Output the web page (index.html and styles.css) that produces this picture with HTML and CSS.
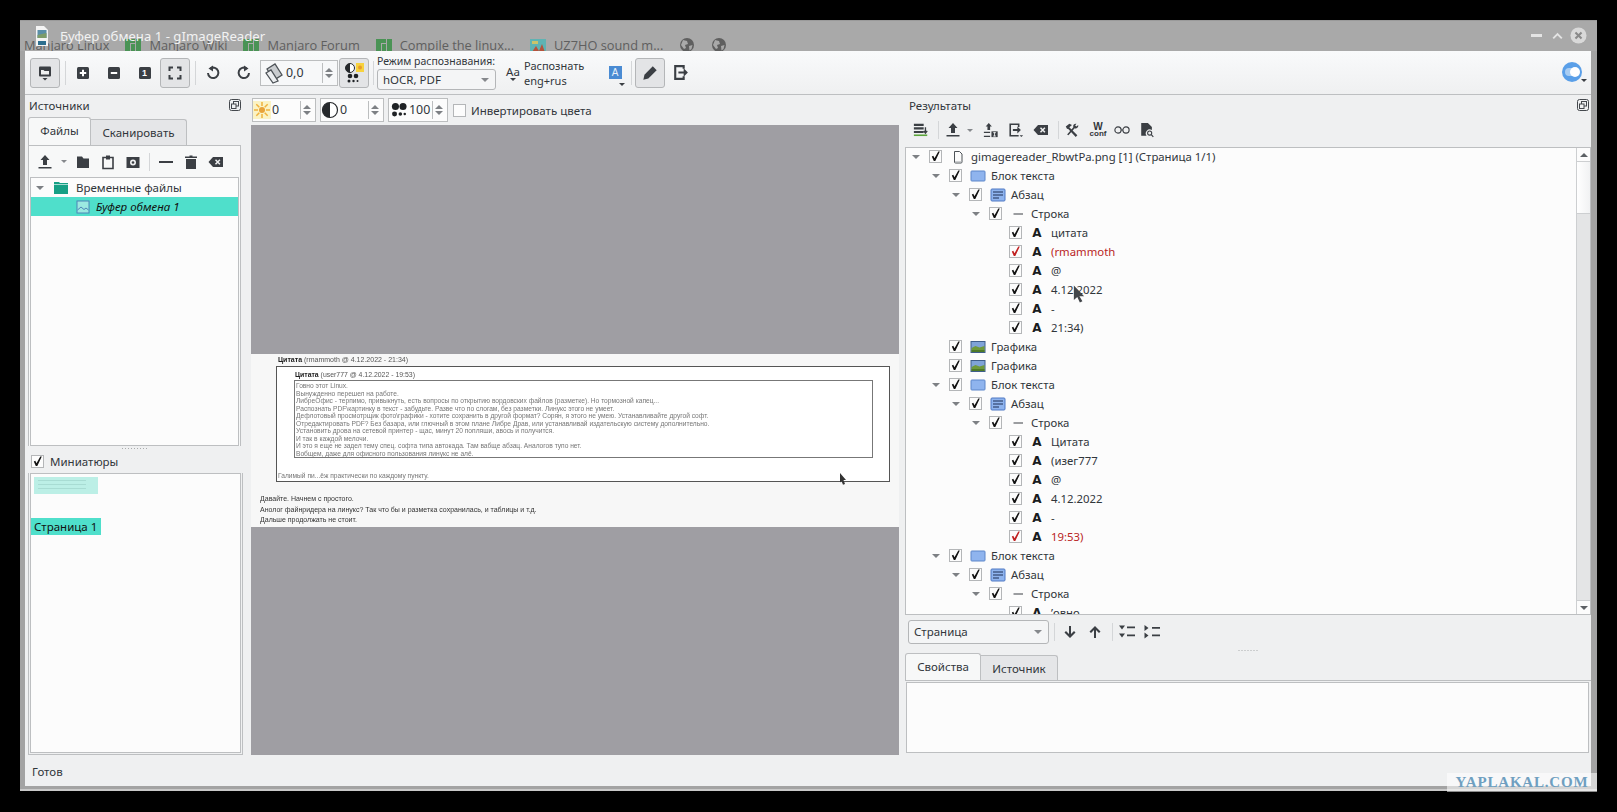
FILE: index.html
```html
<!DOCTYPE html>
<html lang="ru">
<head>
  <meta charset="UTF-8">
  <title>Буфер обмена 1 - gImageReader</title>
  <link rel="stylesheet" href="styles.css">
</head>
<body>

<svg class="sprite" width="0" height="0">
  <symbol id="i-plus" viewBox="0 0 16 16"><rect x="2" y="2" width="12" height="12" rx="1.5" fill="#3b3f44"/><path d="M8 4.8v6.4M4.8 8h6.4" stroke="#fff" stroke-width="2"/></symbol>
  <symbol id="i-minus" viewBox="0 0 16 16"><rect x="2" y="2" width="12" height="12" rx="1.5" fill="#3b3f44"/><path d="M4.8 8h6.4" stroke="#fff" stroke-width="2"/></symbol>
  <symbol id="i-fit" viewBox="0 0 16 16"><path d="M2.5 6V2.500H6M10 2.500h3.500V6M13.500 10v3.500H10M6 13.500H2.500V10" fill="none" stroke="#3b3f44" stroke-width="2"/></symbol>
  <symbol id="i-rotl" viewBox="0 0 16 16"><path d="M5.500 3.400A5.200 5.200 0 1 1 3 8" fill="none" stroke="#3b3f44" stroke-width="2"/><path d="M8 0.500v6L3.500 3.500z" fill="#3b3f44"/></symbol>
  <symbol id="i-rotr" viewBox="0 0 16 16"><path d="M10.500 3.400A5.200 5.200 0 1 0 13 8" fill="none" stroke="#3b3f44" stroke-width="2"/><path d="M8 0.500v6l4.500-3z" fill="#3b3f44"/></symbol>
  <symbol id="i-pages" viewBox="0 0 22 22"><path d="M4 7l8-5 7 11-8 5z" fill="#c9cccf" stroke="#4d5257" stroke-width="1.300"/><path d="M3 11l5-3 7 11-5 2z" fill="#eceef0" stroke="#4d5257" stroke-width="1.300"/></symbol>
  <symbol id="i-sun" viewBox="0 0 18 18"><rect width="18" height="18" fill="#fbf3c4"/><circle cx="9" cy="9" r="3" fill="#e8a33a"/><path d="M9 1v4M9 13v4M1 9h4M13 9h4M3.300 3.300l3 3M11.700 11.700l3 3M14.700 3.300l-3 3M6.300 11.700l-3 3" stroke="#f0b23c" stroke-width="1.500"/></symbol>
  <symbol id="i-contrast" viewBox="0 0 18 18"><circle cx="9" cy="9" r="7.500" fill="#fff" stroke="#26292c" stroke-width="1.200"/><path d="M9 1.500a7.500 7.500 0 0 0 0 15z" fill="#26292c"/></symbol>
  <symbol id="i-dots" viewBox="0 0 18 18"><g fill="#1f2225"><circle cx="5" cy="5" r="4"/><circle cx="13.500" cy="5" r="4"/><circle cx="4" cy="13.500" r="2.800"/><circle cx="10.500" cy="13.500" r="2"/><circle cx="15.500" cy="13.500" r="1.400"/></g></symbol>
  <symbol id="i-pen" viewBox="0 0 18 18"><path d="M3 15l1-4.500L11.500 3l3.500 3.500L7.500 14z" fill="#3b3f44"/></symbol>
  <symbol id="i-export" viewBox="0 0 18 18"><path d="M12 5.500V3H4v12h8v-2.500" fill="none" stroke="#3b3f44" stroke-width="2"/><path d="M7 8h5V5l4 4-4 4v-3H7z" fill="#3b3f44"/></symbol>
  <symbol id="i-upload" viewBox="0 0 16 16"><path d="M8 1l4.500 5H10v5H6V6H3.500zM1.500 13h13v1.500h-13z" fill="#3b3f44"/></symbol>
  <symbol id="i-folder" viewBox="0 0 16 16"><path d="M2 2.500h5l1.500 2H14v9.500H2z" fill="#3b3f44"/></symbol>
  <symbol id="i-clip" viewBox="0 0 16 16"><path d="M3 3.500h10v11H3z" fill="none" stroke="#3b3f44" stroke-width="1.600"/><path d="M6 1.500h4v4H6z" fill="#3b3f44"/></symbol>
  <symbol id="i-camera" viewBox="0 0 16 16"><path d="M1.500 3h13v11h-13z" fill="#3b3f44"/><circle cx="8" cy="8.500" r="3" fill="#eff0f1"/><circle cx="8" cy="8.500" r="1.300" fill="#3b3f44"/></symbol>
  <symbol id="i-dash" viewBox="0 0 16 16"><path d="M1 7h14v2H1z" fill="#3b3f44"/></symbol>
  <symbol id="i-trash" viewBox="0 0 16 16"><path d="M2 2.500h4.500V1.500h3v1H14V4H2zM3 5h10v10H3z" fill="#3b3f44"/></symbol>
  <symbol id="i-back" viewBox="0 0 16 16"><path d="M5 3h10v10H5L.5 8z" fill="#3b3f44"/><path d="M7.500 5.800l4.400 4.400M11.900 5.800l-4.400 4.400" stroke="#eff0f1" stroke-width="1.500"/></symbol>
  <symbol id="i-float" viewBox="0 0 12 12"><rect x=".5" y=".5" width="11" height="11" rx="2" fill="none" stroke="#44484d"/><rect x="4.500" y="2.500" width="5" height="4.500" fill="none" stroke="#44484d"/><rect x="2.500" y="5" width="4.500" height="4.500" fill="#eff0f1" stroke="#44484d"/></symbol>
  <symbol id="i-down" viewBox="0 0 16 16"><path d="M8 14L2.500 8.500 4 7l3 3V2h2v8l3-3 1.500 1.500z" fill="#3b3f44"/></symbol>
  <symbol id="i-up" viewBox="0 0 16 16"><path d="M8 2l5.500 5.500L12 9 9 6v8H7V6L4 9 2.500 7.500z" fill="#3b3f44"/></symbol>
  <symbol id="i-expand" viewBox="0 0 18 16"><path d="M1 1.500h6L4 5.500zM1 9.500h6L4 13.500zM9 2.500h8v1.800H9zM9 10.500h8v1.800H9z" fill="#3b3f44"/></symbol>
  <symbol id="i-collapse" viewBox="0 0 18 16"><path d="M1.500 1l4 3-4 3zM1.500 8.500l4 3-4 3zM9 3h8v1.800H9zM9 10.500h8v1.800H9z" fill="#3b3f44"/></symbol>
  <symbol id="i-stack" viewBox="0 0 18 16"><path d="M1 1h11v2.500H1zM1 5h11v2.500H1zM1 9h11v2.500H1z" fill="#3b3f44"/><path d="M1 13h15v1.800H1z" fill="#5ca53c"/><path d="M14 5v6M12 9l2 2.500L16 9" fill="none" stroke="#3b3f44" stroke-width="1.500"/></symbol>
  <symbol id="i-textup" viewBox="0 0 18 18"><path d="M6.500 1l3.500 4H8v4H5V5H3z" fill="#3b3f44"/><path d="M1 11h7v1.500H1zM1 15.500h7V17H1z" fill="#3b3f44"/><path d="M9.500 10.500h7V17h-7z" fill="#3b3f44"/><path d="M13 11.500v4.500M11.500 12h3M11.500 15.800h3" stroke="#eff0f1"/></symbol>
  <symbol id="i-saveas" viewBox="0 0 18 18"><path d="M12 5.500V2.500H2.500v13H12" fill="none" stroke="#3b3f44" stroke-width="1.800"/><path d="M5.500 8h5V5l4 4-4 4v-3h-5z" fill="#3b3f44"/><path d="M13 15h4l-2 2z" fill="#3b3f44"/></symbol>
  <symbol id="i-tools" viewBox="0 0 18 18"><path d="M2 5l4-3 3 1.500L6 6l9 9-1.800 1.800L4.500 7.500 3.500 8z" fill="#3b3f44"/><path d="M16 3.500a3 3 0 0 1-4 3.500L5 15l-1.500-1L10.500 6A3 3 0 0 1 14 2l-1.500 1.800 1.500 1.200z" fill="#3b3f44"/></symbol>
  <symbol id="i-glasses" viewBox="0 0 18 12"><circle cx="4.500" cy="6" r="3.500" fill="none" stroke="#3b3f44" stroke-width="1.300"/><circle cx="13.500" cy="6" r="3.500" fill="none" stroke="#3b3f44" stroke-width="1.300"/><path d="M8 6h2" stroke="#3b3f44" stroke-width="1.300"/></symbol>
  <symbol id="i-docfind" viewBox="0 0 16 18"><path d="M1.500 1H9l4.500 4.500V9a4.500 4.500 0 0 0-6 6.500h-6z" fill="#3b3f44"/><circle cx="11" cy="12.500" r="2.300" fill="none" stroke="#3b3f44" stroke-width="1.200"/><path d="M12.800 14.300l2.300 2.500" stroke="#3b3f44" stroke-width="1.300"/></symbol>
  <symbol id="i-page" viewBox="0 0 16 16"><path d="M4.500 2.500h5l2.500 2.500v8a1 1 0 0 1-1 1H5.500a1 1 0 0 1-1-1z" fill="#fbfbfb" stroke="#4d5257"/><path d="M5 12.800h6.500" stroke="#b9bcbf"/></symbol>
  <symbol id="i-block" viewBox="0 0 16 16"><rect x="1" y="3" width="14" height="10" rx=".8" fill="#8fb4ee" stroke="#5d86c9"/></symbol>
  <symbol id="i-para" viewBox="0 0 16 16"><rect x="1" y="2" width="14" height="12" rx="1" fill="#8fb4ee" stroke="#4f79c4"/><path d="M3 5h10M3 8h10M3 11h6" stroke="#1f2f55" stroke-width="1.100"/></symbol>
  <symbol id="i-line" viewBox="0 0 16 16"><path d="M3.500 8h9.500" stroke="#3b3f44"/></symbol>
  <symbol id="i-graphic" viewBox="0 0 16 16"><rect x="1" y="2.500" width="14" height="11" fill="#7fa3d8" stroke="#3f5e8c"/><path d="M1.500 9l4-2 4 1.500 5-1.500v6h-13z" fill="#6f9a3c"/><path d="M1.500 11h13v2h-13z" fill="#4e7a28"/></symbol>
  <symbol id="i-image" viewBox="0 0 16 16"><rect x="2" y="2" width="12" height="12" fill="#e8f3f8" fill-opacity=".5" stroke="#4d84b8"/><path d="M2.500 11l3.500-3 3 2.500 2-1.500 2.500 2" fill="none" stroke="#4d84b8"/></symbol>
  <symbol id="i-globe" viewBox="0 0 16 16"><circle cx="8" cy="8" r="7" fill="#5f5f5f"/><path d="M4 3l4 1 1 3-3 1 1 3-2 1-3-4zM10 9l3.500-1-1 4-2 1.500z" fill="#a9a9a9"/></symbol>
  <symbol id="i-manjaro" viewBox="0 0 16 16"><path d="M0 0h10v4H5v12H0zM6 5h4v11H6zM11 0h5v16h-5z" fill="#4a9355"/></symbol>
</svg>

<div class="window">

  <div class="titlebar">
    <div class="bookmarks">
      <span class="bm bm-first">Manjaro Linux</span>
      <svg class="bm-icon"><use href="#i-manjaro"/></svg><span class="bm">Manjaro Wiki</span>
      <svg class="bm-icon"><use href="#i-manjaro"/></svg><span class="bm">Manjaro Forum</span>
      <svg class="bm-icon"><use href="#i-manjaro"/></svg><span class="bm">Compile the linux...</span>
      <svg class="bm-icon" viewBox="0 0 16 16"><rect width="16" height="16" fill="#5fb3b3"/><path d="M0 16l6-9 3 5 3-7 4 11z" fill="#b5533c"/><path d="M2 2h6v3H2z" fill="#c9c46a"/></svg><span class="bm">UZ7HO sound m...</span>
      <svg class="bm-globe"><use href="#i-globe"/></svg>
      <svg class="bm-globe"><use href="#i-globe"/></svg>
    </div>
    <svg class="title-icon" viewBox="0 0 14 22"><path d="M1 1h8l4 4v16H1z" fill="#f4f4f4"/><path d="M2.500 5h9v8h-9z" fill="#5a8fa8"/><path d="M2.500 10l9-2v5h-9z" fill="#7d9c6a"/><path d="M3 16h8v4H3z" fill="#2d6f8f"/></svg>
    <span class="title-text">Буфер обмена 1 - gImageReader</span>
    <div class="win-controls">
      <span class="win-min"></span>
      <svg class="win-max" viewBox="0 0 14 10"><path d="M1.500 8L7 2.500 12.500 8" fill="none" stroke="#e4e4e4" stroke-width="2.400"/></svg>
      <svg class="win-close" viewBox="0 0 18 18"><circle cx="9" cy="9" r="8.500" fill="#d9d9d9"/><path d="M5.800 5.800l6.400 6.400M12.200 5.800l-6.400 6.400" stroke="#8a8a8a" stroke-width="2.200"/></svg>
    </div>
  </div>

  <div class="client">

    <div class="toolbar">
      <button class="tool pressed">
        <svg class="ico" viewBox="0 0 16 16"><rect x="2" y="1.500" width="12" height="10" rx="1" fill="#3b3f44"/><path d="M4 6.500V5h2.500l1 1H12v3.500H4z" fill="#eff0f1"/><path d="M5.500 13h5L8 15.500z" fill="#3b3f44"/></svg>
      </button>
      <span class="sep"></span>
      <span class="tool-plain first-zoom"><svg class="ico"><use href="#i-plus"/></svg></span>
      <span class="tool-plain"><svg class="ico"><use href="#i-minus"/></svg></span>
      <span class="tool-plain"><span class="one-box">1</span></span>
      <button class="tool pressed"><svg class="ico"><use href="#i-fit"/></svg></button>
      <span class="sep"></span>
      <span class="tool-plain rot-first"><svg class="ico"><use href="#i-rotl"/></svg></span>
      <span class="tool-plain"><svg class="ico"><use href="#i-rotr"/></svg></span>
      <div class="spin spin-angle">
        <svg class="spin-icon-lg"><use href="#i-pages"/></svg>
        <span class="spin-value">0,0</span>
        <span class="spin-arrows"><i class="up"></i><i class="down"></i></span>
      </div>
      <button class="tool pressed contrast-btn">
        <svg class="cb-a" viewBox="0 0 22 22">
          <circle cx="7" cy="6" r="4.500" fill="#fff" stroke="#26292c"/><path d="M7 1.500a4.500 4.500 0 0 0 0 9z" fill="#26292c"/>
          <rect x="13" y="1" width="8" height="9" fill="#f7d23e"/><circle cx="17" cy="5.500" r="2" fill="#e89b2c"/>
          <g fill="#1f2225"><circle cx="7" cy="14" r="2.300"/><circle cx="13" cy="14" r="2.300"/><circle cx="6" cy="19" r="1.500"/><circle cx="10.500" cy="19" r="1.200"/><circle cx="14.500" cy="19" r="1"/></g>
        </svg>
      </button>
      <span class="sep sep-mode"></span>
      <div class="mode">
        <span class="mode-label">Режим распознавания:</span>
        <div class="combo combo-mode"><span>hOCR, PDF</span><i class="combo-caret"></i></div>
      </div>
      <div class="aa"><span>Aa</span><i class="mini-caret"></i></div>
      <div class="recognize"><span>Распознать</span><span>eng+rus</span></div>
      <div class="ocr-btn"><span class="ocr-a">A</span><i class="mini-caret"></i></div>
      <span class="sep sep-ocr"></span>
      <button class="tool pressed"><svg class="ico ico-pen"><use href="#i-pen"/></svg></button>
      <span class="tool-plain"><svg class="ico ico-export"><use href="#i-export"/></svg></span>
      <div class="toggle"><span class="toggle-track"><span class="toggle-knob"></span></span><i class="mini-caret"></i></div>
    </div>

    <div class="main">

      <!-- источники -->
      <div class="dock-left">
        <div class="dock-title"><span>Источники</span><svg class="float"><use href="#i-float"/></svg></div>
        <div class="tabs">
          <span class="tab active tab-files">Файлы</span>
          <span class="tab tab-scan">Сканировать</span>
        </div>
        <div class="tab-pane">
          <div class="small-bar">
            <svg class="ico"><use href="#i-upload"/></svg>
            <i class="mini-caret grey"></i>
            <svg class="ico"><use href="#i-folder"/></svg>
            <svg class="ico"><use href="#i-clip"/></svg>
            <svg class="ico"><use href="#i-camera"/></svg>
            <span class="sep sep-small"></span>
            <svg class="ico"><use href="#i-dash"/></svg>
            <svg class="ico"><use href="#i-trash"/></svg>
            <svg class="ico"><use href="#i-back"/></svg>
          </div>
          <div class="files">
            <div class="file-row"><i class="twisty"></i><svg class="folder" viewBox="0 0 16 14"><path d="M1 1h5l1 1h8v11H1z" fill="#16a085"/><path d="M1 3h14v1H1z" fill="#a5dcd2"/></svg><span>Временные файлы</span></div>
            <div class="file-row selected"><svg class="file-ico"><use href="#i-image"/></svg><em>Буфер обмена 1</em></div>
          </div>
        </div>
        <div class="grip"></div>
        <div class="thumb-check"><span class="cb"></span><span>Миниатюры</span></div>
        <div class="thumbs">
          <div class="thumb-pic"><span></span><span></span><span></span></div>
          <div class="thumb-label">Страница 1</div>
        </div>
      </div>

      <!-- изображение -->
      <div class="center">
        <div class="adjust">
          <div class="spin"><svg class="spin-icon"><use href="#i-sun"/></svg><span class="spin-value">0</span><span class="spin-arrows"><i class="up"></i><i class="down"></i></span></div>
          <div class="spin"><svg class="spin-icon"><use href="#i-contrast"/></svg><span class="spin-value">0</span><span class="spin-arrows"><i class="up"></i><i class="down"></i></span></div>
          <div class="spin spin-res"><svg class="spin-icon"><use href="#i-dots"/></svg><span class="spin-value">100</span><span class="spin-arrows"><i class="up"></i><i class="down"></i></span></div>
          <span class="cb empty"></span>
          <span class="invert">Инвертировать цвета</span>
        </div>
        <div class="canvas">
          <div class="shot">
            <p class="shot-head"><b>Цитата</b> (rmammoth @ 4.12.2022 - 21:34)</p>
            <div class="quote">
              <p class="quote-head"><b>Цитата</b> (user777 @ 4.12.2022 - 19:53)</p>
              <div class="quote-inner">
                <p>Говно этот Linux.</p>
                <p>Вынужденно перешел на работе.</p>
                <p>ЛибреОфис - терпимо, привыкнуть, есть вопросы по открытию вордовских файлов (разметке). Но тормозной капец...</p>
                <p>Распознать PDF\картинку в текст - забудьте. Разве что по слогам, без разметки. Линукс этого не умеет.</p>
                <p>Дефлотовый просмотрщик фото\графики - хотите сохранить в другой формат? Сорян, я этого не умею. Устанавливайте другой софт.</p>
                <p>Отредактировать PDF? Без базара, или глючный в этом плане Либре Драв, или устанавливай издательскую систему дополнительно.</p>
                <p>Установить дрова на сетевой принтер - щас, минут 20 попляши, авось и получится.</p>
                <p>И так в каждой мелочи.</p>
                <p>И это я еще не задел тему спец. софта типа автокада. Там вабще абзац. Аналогов тупо нет.</p>
                <p>Вобщем, даже для офисного пользования линукс не алё.</p>
              </div>
              <p class="quote-foot">Галимый пи...ёж практически по каждому пункту.</p>
            </div>
            <div class="shot-text">
              <p>Давайте. Начнем с простого.</p>
              <p>Анолог файнридера на линукс? Так что бы и разметка сохранилась, и таблицы и т.д.</p>
              <p>Дальше продолжать не стоит.</p>
            </div>
            <svg class="shot-cursor" viewBox="0 0 8 12"><path d="M1 0l6 7H4.500L6 11l-2 .8L2.500 8 1 9.500z" fill="#333"/></svg>
          </div>
        </div>
      </div>

      <!-- результаты -->
      <div class="dock-right">
        <div class="dock-title"><span>Результаты</span><svg class="float"><use href="#i-float"/></svg></div>
        <div class="result-bar">
          <svg class="ico"><use href="#i-stack"/></svg>
          <span class="sep sep-small"></span>
          <svg class="ico"><use href="#i-upload"/></svg>
          <i class="mini-caret grey"></i>
          <svg class="ico"><use href="#i-textup"/></svg>
          <svg class="ico"><use href="#i-saveas"/></svg>
          <svg class="ico"><use href="#i-back"/></svg>
          <span class="sep sep-small sep-tight"></span>
          <svg class="ico"><use href="#i-tools"/></svg>
          <span class="wconf"><b>W</b><b>conf</b></span>
          <svg class="ico"><use href="#i-glasses"/></svg>
          <svg class="ico"><use href="#i-docfind"/></svg>
        </div>
        <div class="tree">
          <div class="tree-rows">
            <div class="row lvl0"><i class="twisty"></i><span class="cb"></span><svg class="row-ico"><use href="#i-page"/></svg><span>gimagereader_RbwtPa.png [1] (Страница 1/1)</span></div>
            <div class="row lvl1"><i class="twisty"></i><span class="cb"></span><svg class="row-ico"><use href="#i-block"/></svg><span>Блок текста</span></div>
            <div class="row lvl2"><i class="twisty"></i><span class="cb"></span><svg class="row-ico"><use href="#i-para"/></svg><span>Абзац</span></div>
            <div class="row lvl3"><i class="twisty"></i><span class="cb"></span><svg class="row-ico"><use href="#i-line"/></svg><span>Строка</span></div>
            <div class="row lvl4"><i class="twisty none"></i><span class="cb"></span><b class="glyph">A</b><span>цитата</span></div>
            <div class="row lvl4 bad"><i class="twisty none"></i><span class="cb"></span><b class="glyph">A</b><span>(rmammoth</span></div>
            <div class="row lvl4"><i class="twisty none"></i><span class="cb"></span><b class="glyph">A</b><span>@</span></div>
            <div class="row lvl4"><i class="twisty none"></i><span class="cb"></span><b class="glyph">A</b><span>4.12.2022</span></div>
            <div class="row lvl4"><i class="twisty none"></i><span class="cb"></span><b class="glyph">A</b><span>-</span></div>
            <div class="row lvl4"><i class="twisty none"></i><span class="cb"></span><b class="glyph">A</b><span>21:34)</span></div>
            <div class="row lvl1"><i class="twisty none"></i><span class="cb"></span><svg class="row-ico"><use href="#i-graphic"/></svg><span>Графика</span></div>
            <div class="row lvl1"><i class="twisty none"></i><span class="cb"></span><svg class="row-ico"><use href="#i-graphic"/></svg><span>Графика</span></div>
            <div class="row lvl1"><i class="twisty"></i><span class="cb"></span><svg class="row-ico"><use href="#i-block"/></svg><span>Блок текста</span></div>
            <div class="row lvl2"><i class="twisty"></i><span class="cb"></span><svg class="row-ico"><use href="#i-para"/></svg><span>Абзац</span></div>
            <div class="row lvl3"><i class="twisty"></i><span class="cb"></span><svg class="row-ico"><use href="#i-line"/></svg><span>Строка</span></div>
            <div class="row lvl4"><i class="twisty none"></i><span class="cb"></span><b class="glyph">A</b><span>Цитата</span></div>
            <div class="row lvl4"><i class="twisty none"></i><span class="cb"></span><b class="glyph">A</b><span>(изег777</span></div>
            <div class="row lvl4"><i class="twisty none"></i><span class="cb"></span><b class="glyph">A</b><span>@</span></div>
            <div class="row lvl4"><i class="twisty none"></i><span class="cb"></span><b class="glyph">A</b><span>4.12.2022</span></div>
            <div class="row lvl4"><i class="twisty none"></i><span class="cb"></span><b class="glyph">A</b><span>-</span></div>
            <div class="row lvl4 bad"><i class="twisty none"></i><span class="cb"></span><b class="glyph">A</b><span>19:53)</span></div>
            <div class="row lvl1"><i class="twisty"></i><span class="cb"></span><svg class="row-ico"><use href="#i-block"/></svg><span>Блок текста</span></div>
            <div class="row lvl2"><i class="twisty"></i><span class="cb"></span><svg class="row-ico"><use href="#i-para"/></svg><span>Абзац</span></div>
            <div class="row lvl3"><i class="twisty"></i><span class="cb"></span><svg class="row-ico"><use href="#i-line"/></svg><span>Строка</span></div>
            <div class="row lvl4"><i class="twisty none"></i><span class="cb"></span><b class="glyph">A</b><span>’овно</span></div>
          </div>
          <div class="scrollbar">
            <span class="sb-btn"><i class="up"></i></span>
            <span class="sb-thumb"></span>
            <span class="sb-track"></span>
            <span class="sb-btn sb-btn-end"><i class="down"></i></span>
          </div>
        </div>
        <div class="nav-bar">
          <div class="combo combo-page"><span>Страница</span><i class="combo-caret"></i></div>
          <span class="sep sep-small"></span>
          <svg class="ico"><use href="#i-down"/></svg>
          <svg class="ico"><use href="#i-up"/></svg>
          <span class="sep sep-small"></span>
          <svg class="ico ico-wide expand"><use href="#i-expand"/></svg>
          <svg class="ico ico-wide"><use href="#i-collapse"/></svg>
        </div>
        <div class="grip grip-right"></div>
        <div class="tabs tabs-right">
          <span class="tab active tab-props">Свойства</span>
          <span class="tab tab-source">Источник</span>
        </div>
        <div class="props-pane"><div class="props-box"></div></div>
      </div>
    </div>

    <div class="statusbar">Готов</div>
  </div>

  <svg class="cursor" viewBox="0 0 14 20"><path d="M1 0l12 12.500H8.500l-1 0 3.500 6-3 1.500-3-6.500L1 17z" fill="#42464a"/></svg>
  <div class="watermark">YAPLAKAL.COM</div>
</div>

</body>
</html>
```

FILE: styles.css
```css
* {
  box-sizing: border-box;
}

html, body {
  margin: 0;
  height: 100%;
  background: #000;
  overflow: hidden;
}

body {
  padding: 20px 20px 0;
  font-family: "Noto Sans", sans-serif;
  font-size: 11.500px;
  color: #31363b;
}

p {
  margin: 0;
}

.sprite {
  display: block;
  height: 0;
}

.window {
  position: relative;
  width: 1577px;
  height: 771px;
  background: #a3a3a3;
  padding: 0 6px 3px 5px;
  border-bottom: 2px solid #c9c9c9;
}

/* заголовок окна */
.titlebar {
  position: relative;
  height: 31px;
  margin: 0 -6px 0 -5px;
  background: #a9a9a9;
  border-top: 1px solid #9a9a9a;
  overflow: hidden;
  display: flex;
  align-items: center;
  padding-left: 15px;
}

.title-icon {
  position: relative;
  width: 14px;
  height: 22px;
  margin-top: -1px;
}

.title-text {
  position: relative;
  margin-left: 11px;
  margin-top: -1px;
  font-size: 13.200px;
  color: #f2f2f2;
}

.win-controls {
  position: absolute;
  right: 10px;
  top: 6px;
  display: flex;
  align-items: center;
}

.win-min {
  width: 11px;
  height: 3px;
  background: #e4e4e4;
  margin-right: 10px;
}

.win-max {
  width: 11px;
  height: 8px;
  margin-right: 7px;
}

.win-close {
  width: 17px;
  height: 17px;
}

.bookmarks {
  position: absolute;
  left: 4px;
  top: 14px;
  display: flex;
  align-items: center;
  font-family: "Open Sans", sans-serif;
  font-size: 12.800px;
  color: #5f5f5f;
  white-space: nowrap;
}

.bm {
  margin-left: 8px;
  margin-right: 16px;
}

.bm-first {
  margin-left: 0;
}

.bm-icon {
  width: 16px;
  height: 16px;
  flex: none;
  align-self: flex-start;
  margin-top: 4px;
}

.bm-globe {
  width: 16px;
  height: 16px;
  margin-right: 16px;
}

/* панель инструментов */
.client {
  height: 735px;
  background: #eff0f1;
}

.toolbar {
  height: 44px;
  display: flex;
  align-items: center;
  padding-left: 5px;
  background: linear-gradient(#f9fafb, #eff0f1);
  border-bottom: 1px solid #bdbfc1;
  position: relative;
}

.tool {
  width: 30px;
  height: 30px;
  padding: 0;
  display: flex;
  align-items: center;
  justify-content: center;
  background: #e3e4e6;
  border: 1px solid #b4b6b8;
  border-radius: 3px;
  flex: none;
}

.tool-plain {
  width: 31px;
  height: 30px;
  display: flex;
  align-items: center;
  justify-content: center;
  flex: none;
}

.ico {
  width: 16px;
  height: 16px;
  flex: none;
}

.ico-pen {
  width: 20px;
  height: 20px;
}

.ico-export {
  width: 19px;
  height: 19px;
}

.sep {
  width: 1px;
  height: 24px;
  background: #d4d6d8;
  margin: 0 5px;
  flex: none;
}

.sep-small {
  height: 18px;
  margin: 0;
}

.first-zoom {
  margin-left: -4px;
}

.one-box {
  width: 12px;
  height: 12px;
  border-radius: 1.500px;
  background: #3b3f44;
  color: #fff;
  font: bold 9px/12px "Liberation Sans", sans-serif;
  text-align: center;
}

.rot-first {
  margin-left: -4px;
}

.spin {
  height: 24px;
  width: 64px;
  background: #fcfcfc;
  border: 1px solid #bcbebf;
  display: flex;
  align-items: center;
  flex: none;
  padding: 2px 2px 2px 0;
}

.spin-res {
  width: 60px;
}

.spin-res .spin-icon {
  width: 16px;
  height: 16px;
  margin-left: 2px;
}

.spin-res .spin-value {
  margin-left: 2px;
}

.spin-angle {
  width: 78px;
  height: 26px;
  margin-left: 1px;
  padding-left: 2px;
  background: #f7f8f9;
}

.spin-icon-lg {
  width: 22px;
  height: 22px;
  flex: none;
}

.spin-icon {
  width: 18px;
  height: 18px;
  flex: none;
}

.spin-value {
  flex: 1;
  margin-left: 1px;
  font-size: 12.400px;
  line-height: 18px;
}

.spin-arrows {
  width: 13px;
  height: 100%;
  border-left: 1px solid #bcbebf;
  display: flex;
  flex-direction: column;
  align-items: center;
  justify-content: center;
  gap: 2px;
}

.up {
  width: 0;
  height: 0;
  border-left: 4px solid transparent;
  border-right: 4px solid transparent;
  border-bottom: 4px solid #7d8084;
}

.down {
  width: 0;
  height: 0;
  border-left: 4px solid transparent;
  border-right: 4px solid transparent;
  border-top: 4px solid #7d8084;
}

.contrast-btn {
  margin-left: 1px;
}

.cb-a {
  width: 22px;
  height: 22px;
}

.sep-mode {
  margin: 0 3px 0 4px;
}

.mode {
  width: 119px;
  flex: none;
  display: flex;
  flex-direction: column;
  line-height: 17px;
}

.mode-label {
  font-size: 10.500px;
  white-space: nowrap;
  height: 16px;
  margin-top: -2px;
}

.combo {
  height: 21px;
  display: flex;
  align-items: center;
  justify-content: space-between;
  padding: 0 6px 0 5px;
  background: #f4f5f6;
  border: 1px solid #b4b6b8;
  border-radius: 3px;
}

.combo-caret {
  width: 0;
  height: 0;
  border-left: 4px solid transparent;
  border-right: 4px solid transparent;
  border-top: 4px solid #85888c;
}

.aa {
  margin-left: 8px;
  width: 18px;
  display: flex;
  flex-direction: column;
  align-items: center;
  font-size: 11.500px;
  line-height: 13px;
}

.mini-caret {
  display: block;
  width: 0;
  height: 0;
  border-left: 3px solid transparent;
  border-right: 3px solid transparent;
  border-top: 3px solid #3b3f44;
}

.mini-caret.grey {
  border-top-color: #85888c;
}

.recognize {
  margin-left: 2px;
  width: 81px;
  display: flex;
  flex-direction: column;
  font-size: 11px;
  line-height: 15px;
}

.ocr-btn {
  width: 20px;
  display: flex;
  flex-direction: column;
  align-items: center;
  gap: 4px;
  margin-top: 6px;
}

.ocr-a {
  width: 13px;
  height: 13px;
  background: #4a8bd3;
  color: #e8f1fa;
  font: 10px/13px "Liberation Sans", sans-serif;
  text-align: center;
}

.ocr-btn .mini-caret {
  margin-left: 14px;
}

.sep-ocr {
  margin: 0 3px 0 6px;
}

.toggle {
  position: absolute;
  right: 4px;
  top: 11px;
  display: flex;
  align-items: flex-end;
}

.toggle-track {
  width: 20px;
  height: 20px;
  border-radius: 50%;
  background: #5a9fe8;
  position: relative;
  display: block;
}

.toggle-knob {
  position: absolute;
  left: 3px;
  top: 6px;
  width: 14px;
  height: 8px;
  border-radius: 4px;
  background: #a9cdf2;
}

.toggle-knob::after {
  content: "";
  position: absolute;
  right: -1px;
  top: -1px;
  width: 10px;
  height: 10px;
  border-radius: 50%;
  background: #fff;
}

.toggle .mini-caret {
  margin-left: -1px;
}

/* основная область */
.main {
  height: 660px;
  display: flex;
}

.dock-left {
  width: 221px;
  flex: none;
  padding-left: 3px;
  display: flex;
  flex-direction: column;
}

.dock-title {
  height: 20px;
  display: flex;
  align-items: center;
  justify-content: space-between;
  padding: 0 5px 0 1px;
  margin-bottom: 2px;
  flex: none;
}

.float {
  width: 12px;
  height: 12px;
}

.tabs {
  height: 28px;
  display: flex;
  align-items: flex-end;
}

.tab {
  height: 26px;
  display: flex;
  align-items: center;
  justify-content: center;
  background: #e5e6e8;
  border: 1px solid #bdbfc1;
  border-bottom: 0;
  border-left: 0;
  border-radius: 0 3px 0 0;
}

.tab.active {
  height: 28px;
  background: #f7f8f8;
  border-left: 1px solid #bdbfc1;
  border-radius: 3px 3px 0 0;
  padding-bottom: 3px;
}

.tab-files {
  width: 63px;
}

.tab-scan {
  width: 96px;
}

.tab-pane {
  height: 301px;
  width: 213px;
  background: #f7f8f8;
  border: 1px solid #bdbfc1;
  border-bottom: 0;
  padding: 0 1px;
  display: flex;
  flex-direction: column;
}

.small-bar {
  height: 31px;
  display: flex;
  align-items: center;
  padding-left: 7px;
  flex: none;
}

.small-bar .mini-caret {
  margin: 0 8px;
}

.small-bar .ico + .ico {
  margin-left: 9px;
}

.small-bar .sep-small {
  margin: 0 8px;
}

.small-bar .sep-small + .ico {
  margin-left: 0;
}

.files {
  flex: 1;
  background: #fcfcfc;
  border: 1px solid #bdbfc1;
}

.file-row {
  height: 19px;
  display: flex;
  align-items: center;
  position: relative;
  padding-left: 5px;
}

.twisty {
  display: block;
  width: 0;
  height: 0;
  border-left: 4px solid transparent;
  border-right: 4px solid transparent;
  border-top: 4px solid #7d8084;
  flex: none;
}

.twisty.none {
  border-top-color: transparent;
}

.folder {
  width: 16px;
  height: 14px;
  margin-left: 9px;
}

.file-row span {
  margin-left: 7px;
}

.file-row.selected {
  background: #4fdfcb;
  padding-left: 44px;
  color: #111;
}

.file-ico {
  width: 16px;
  height: 16px;
  margin-right: 5px;
}

.grip {
  height: 4px;
  width: 213px;
  flex: none;
  background: radial-gradient(circle, #a9abad 0.7px, transparent 1px) center / 3px 3px repeat-x;
  clip-path: inset(0 92px);
}

.thumb-check {
  height: 23px;
  display: flex;
  align-items: center;
  gap: 6px;
  padding-left: 3px;
  flex: none;
}

.cb {
  display: block;
  position: relative;
  width: 13px;
  height: 13px;
  background: #fcfcfc;
  border: 1px solid #b4b6b8;
  flex: none;
}

.cb::after {
  content: "";
  position: absolute;
  left: 0;
  top: 0;
  width: 11px;
  height: 11px;
  background: #111;
  clip-path: polygon(1.800px 5.500px, 3.300px 4.800px, 4.500px 7.300px, 8.300px 0.500px, 9.800px 0.500px, 5.300px 10px, 3.800px 10px);
}

.cb.empty::after {
  display: none;
}

.thumbs {
  flex: 1;
  width: 211px;
  margin: 0 0 2px 2px;
  background: #fcfcfc;
  border: 1px solid #bdbfc1;
  outline: 1px solid #bdbfc1;
  outline-offset: 1px;
  clip-path: inset(0 -3px -3px -3px);
  padding-top: 3px;
}

.thumb-pic {
  width: 64px;
  height: 17px;
  margin-left: 3px;
  background: #bcefe6;
  padding: 3px 4px;
  display: flex;
  flex-direction: column;
  gap: 3px;
}

.thumb-pic span {
  display: block;
  height: 1px;
  width: 48px;
  background: #a8dcd3;
}

.thumb-label {
  margin-top: 24px;
  width: 70px;
  height: 17px;
  line-height: 17px;
  padding-left: 3px;
  background: #4fdfcb;
  color: #111;
  white-space: nowrap;
}

/* центр */
.center {
  width: 648px;
  flex: none;
  margin-left: 5px;
  display: flex;
  flex-direction: column;
}

.adjust {
  height: 30px;
  display: flex;
  align-items: center;
  gap: 4px;
  padding-left: 1px;
  flex: none;
}

.adjust .cb {
  margin-left: 1px;
}

.invert {
  margin-left: 1px;
  white-space: nowrap;
}

.canvas {
  height: 630px;
  background: #9f9ea3;
  display: flex;
  align-items: center;
  flex: none;
  padding-top: 1px;
}

.shot {
  position: relative;
  width: 100%;
  height: 173px;
  background: #f7f7f7;
  font-family: "Liberation Sans", sans-serif;
  font-size: 6.650px;
  line-height: 7.550px;
  color: #555;
  padding: 2px 9px 0 25px;
  filter: blur(0.25px);
}

.shot-head {
  height: 10px;
  padding-left: 2px;
  font-size: 7px;
}

.shot b {
  color: #222;
}

.quote {
  height: 116px;
  background: #fff;
  border: 1px solid #555;
  padding: 4px 16px 0 1px;
}

.quote-head {
  padding-left: 17px;
  height: 9px;
  font-size: 6.900px;
}

.quote-inner {
  margin-left: 16px;
  height: 78px;
  border: 1px solid #777;
  padding: 1px 0 0 1px;
  color: #777;
}

.quote-foot {
  margin-top: 14px;
  color: #777;
}

.shot-text {
  margin: 12px 0 0 -16px;
  color: #333;
  font-size: 7px;
  line-height: 10.700px;
}

.shot-cursor {
  position: absolute;
  left: 588px;
  top: 119px;
  width: 8px;
  height: 12px;
}

/* результаты */
.dock-right {
  flex: 1;
  margin-left: 6px;
  display: flex;
  flex-direction: column;
  min-width: 0;
}

.dock-right .dock-title {
  padding-left: 4px;
  padding-right: 2px;
  margin-bottom: 0;
}

.result-bar {
  height: 30px;
  margin-bottom: 2px;
  display: flex;
  align-items: center;
  flex: none;
  padding-left: 8px;
}

.result-bar .ico {
  margin-right: 9px;
}

.result-bar .sep-small {
  margin: 0 6px 0 0;
}

.result-bar .sep-tight {
  margin-right: 5px;
}

.result-bar .mini-caret {
  margin: 0 10px 0 -3px;
}

.wconf {
  display: flex;
  flex-direction: column;
  align-items: center;
  font-family: "Liberation Sans", sans-serif;
  font-size: 8px;
  line-height: 7px;
  width: 18px;
  margin-right: 7px;
}

.wconf b:first-child {
  font-size: 10px;
}

.tree {
  height: 468px;
  display: flex;
  background: #fcfcfc;
  border: 1px solid #bdbfc1;
  flex: none;
}

.tree-rows {
  flex: 1;
  overflow: hidden;
  font-size: 11.350px;
}

.row {
  height: 19px;
  display: flex;
  align-items: center;
  white-space: nowrap;
}

.row:first-child {
  margin-top: -1px;
}

.row .twisty {
  margin: 0 9px 0 6px;
}

.lvl1 { padding-left: 20px; }
.lvl2 { padding-left: 40px; }
.lvl3 { padding-left: 60px; }
.lvl4 { padding-left: 80px; }

.row-ico {
  width: 16px;
  height: 16px;
  margin: 0 5px 0 8px;
  flex: none;
}

.glyph {
  width: 16px;
  margin: 0 6px 0 7px;
  font: bold 12px "DejaVu Sans", sans-serif;
  text-align: center;
  color: #1a1c1e;
  flex: none;
}

.bad span:last-child {
  color: #b92525;
}

.bad .cb::after {
  background: #c02020;
}

.scrollbar {
  width: 14px;
  flex: none;
  display: flex;
  flex-direction: column;
  border-left: 1px solid #cdcfd1;
}

.sb-btn {
  height: 14px;
  flex: none;
  display: flex;
  align-items: center;
  justify-content: center;
  border-bottom: 1px solid #cdcfd1;
}

.sb-btn-end {
  border-bottom: 0;
  border-top: 1px solid #cdcfd1;
}

.sb-btn .up {
  border-bottom-color: #5d6165;
}

.sb-btn .down {
  border-top-color: #5d6165;
}

.sb-thumb {
  height: 52px;
  flex: none;
  background: linear-gradient(90deg, #fff, #f1f2f3);
  border-bottom: 1px solid #cdcfd1;
}

.sb-track {
  flex: 1;
  background: #e4e5e6;
}

.nav-bar {
  height: 33px;
  display: flex;
  align-items: center;
  padding-left: 3px;
  flex: none;
}

.combo-page {
  width: 141px;
  height: 24px;
  margin-right: 5px;
}

.nav-bar .sep-small {
  margin-right: 7px;
}

.nav-bar .ico {
  margin-right: 9px;
}

.nav-bar .ico-wide {
  width: 18px;
  margin-right: 7px;
}

.nav-bar .expand {
  margin-left: -2px;
}

.grip-right {
  height: 5px;
  width: 100%;
  clip-path: inset(0 332px);
}

.tabs-right {
  height: 27px;
  flex: none;
}

.tabs-right .tab {
  height: 25px;
}

.tabs-right .tab.active {
  height: 27px;
  padding-bottom: 1px;
}

.tab-props {
  width: 76px;
}

.tab-source {
  width: 77px;
}

.props-pane {
  height: 75px;
  flex: none;
  border-top: 1px solid #bdbfc1;
  padding: 1px 2px 0 1px;
}

.props-box {
  height: 71px;
  background: #fcfcfc;
  border: 1px solid #bdbfc1;
}

.statusbar {
  height: 31px;
  display: flex;
  align-items: center;
  padding: 1px 0 0 7px;
}

/* поверх всего */
.cursor {
  position: absolute;
  left: 1053px;
  top: 265px;
  width: 12px;
  height: 18px;
}

.watermark {
  position: absolute;
  right: 0;
  bottom: -3px;
  width: 150px;
  height: 19px;
  background: rgba(255, 255, 255, 0.55);
  color: #6f9fc0;
  font: bold 15px/19px "Liberation Serif", serif;
  letter-spacing: 0.8px;
  text-align: center;
}
```
